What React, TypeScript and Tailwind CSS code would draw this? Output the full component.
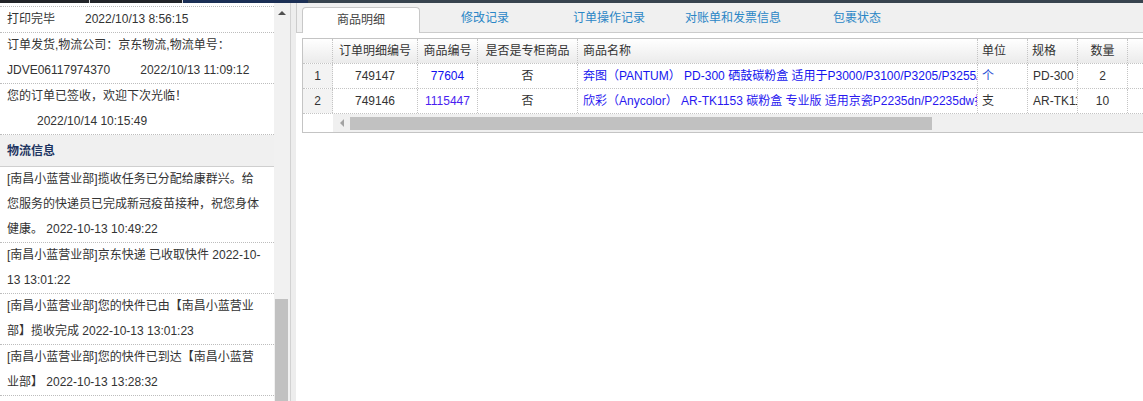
import React from "react";

const cellBase =
  "h-full border-r border-dotted border-[#c4c4c4] overflow-hidden whitespace-nowrap leading-[24px]";
const gridCols =
  "grid grid-cols-[30px_85px_60px_100px_400px_50px_50px_50px_120px]";

function LeftRow({ children }: { children: React.ReactNode }) {
  return (
    <div className="border-b border-dotted border-[#bdbdbd] pl-[7px] leading-[25px] text-[#333]">
      {children}
    </div>
  );
}

function Line({ children }: { children: React.ReactNode }) {
  return <div className="whitespace-nowrap">{children}</div>;
}

const headers = [
  { t: "", c: "justify-center" },
  { t: "订单明细编号", c: "text-center" },
  { t: "商品编号", c: "text-center" },
  { t: "是否是专柜商品", c: "text-center" },
  { t: "商品名称", c: "pl-[5px]" },
  { t: "单位", c: "pl-[4px]" },
  { t: "规格", c: "pl-[4px]" },
  { t: "数量", c: "text-center" },
  { t: "", c: "" },
];

const rows = [
  {
    n: "1",
    id: "749147",
    code: "77604",
    codeColor: "text-[#1010f0]",
    zg: "否",
    name: "奔图（PANTUM） PD-300 硒鼓碳粉盒 适用于P3000/P3100/P3205/P3255/P3405/M6700/M6800系列",
    nameColor: "text-[#1515ee]",
    unit: "个",
    unitColor: "text-[#2a4fd6]",
    spec: "PD-300",
    qty: "2",
  },
  {
    n: "2",
    id: "749146",
    code: "1115447",
    codeColor: "text-[#4a1ef0]",
    zg: "否",
    name: "欣彩（Anycolor） AR-TK1153 碳粉盒 专业版 适用京瓷P2235dn/P2235dw打印机",
    nameColor: "text-[#2a18f0]",
    unit: "支",
    unitColor: "text-[#333]",
    spec: "AR-TK1153",
    qty: "10",
  },
];

export default function App() {
  return (
    <div className="w-[1143px] h-[401px] overflow-hidden flex flex-col bg-white text-[12px] font-['Liberation_Sans','Noto_Sans_CJK_SC',sans-serif]">
      {/* top dark strip */}
      <div className="h-[3px] flex shrink-0">
        <div className="w-[89px] bg-[#222428]" />
        <div className="w-px bg-[#d8d8d8]" />
        <div className="w-[92px] bg-[#222428]" />
        <div className="w-px bg-[#d8d8d8]" />
        <div className="w-[125px] bg-[#1b2f55]" />
        <div className="flex-1 bg-[#38444f]" />
      </div>

      <div className="flex flex-1 min-h-0">
        {/* left panel */}
        <div className="w-[274px] shrink-0 overflow-hidden bg-white">
          <div className="h-[4px] border-b border-dotted border-[#bdbdbd]" />
          <LeftRow>
            <Line>
              打印完毕<span className="inline-block ml-[30px]">2022/10/13 8:56:15</span>
            </Line>
          </LeftRow>
          <LeftRow>
            <Line>订单发货,物流公司：京东物流,物流单号：</Line>
            <Line>
              JDVE06117974370<span className="inline-block ml-[30px]">2022/10/13 11:09:12</span>
            </Line>
          </LeftRow>
          <LeftRow>
            <Line>您的订单已签收，欢迎下次光临！</Line>
            <Line>
              <span className="inline-block ml-[30px]">2022/10/14 10:15:49</span>
            </Line>
          </LeftRow>
          <div className="h-[32px] bg-[#f0f0f0] border-b border-[#cfcfcf] pl-[7px] flex items-center font-bold text-[#1d3461]">
            物流信息
          </div>
          <LeftRow>
            <Line>[南昌小蓝营业部]揽收任务已分配给康群兴。给</Line>
            <Line>您服务的快递员已完成新冠疫苗接种，祝您身体</Line>
            <Line>健康。 2022-10-13 10:49:22</Line>
          </LeftRow>
          <LeftRow>
            <Line>[南昌小蓝营业部]京东快递 已收取快件 2022-10-</Line>
            <Line>13 13:01:22</Line>
          </LeftRow>
          <LeftRow>
            <Line>[南昌小蓝营业部]您的快件已由【南昌小蓝营业</Line>
            <Line>部】揽收完成 2022-10-13 13:01:23</Line>
          </LeftRow>
          <LeftRow>
            <Line>[南昌小蓝营业部]您的快件已到达【南昌小蓝营</Line>
            <Line>业部】 2022-10-13 13:28:32</Line>
          </LeftRow>
        </div>

        {/* left scrollbar */}
        <div className="w-[16px] shrink-0 bg-[#f1f1f1] flex flex-col">
          <div className="pt-[8px] pl-[4px]">
            <div className="w-0 h-0 border-x-[4px] border-x-transparent border-b-[4px] border-b-[#505050]" />
          </div>
          <div className="mt-auto ml-px w-[13px] h-[102px] bg-[#c1c1c1]" />
        </div>
        <div className="w-px shrink-0 bg-[#d2d2d2]" />
        <div className="w-[5px] shrink-0 bg-[#ededed]" />

        {/* right panel */}
        <div className="flex-1 min-w-0 overflow-hidden flex flex-col">
          {/* tabs */}
          <div className="h-[30px] shrink-0 bg-[#f0f0f0] border-b border-l border-[#cccccc] flex items-end gap-[6px] pl-[5px]">
            <div className="w-[118px] h-[26px] -mb-px bg-white border border-b-0 border-[#c8c8c8] rounded-t-[4px] flex items-center justify-center pb-[2px] text-[#444]">
              商品明细
            </div>
            {["修改记录", "订单操作记录", "对账单和发票信息", "包裹状态"].map((t) => (
              <div
                key={t}
                className="w-[118px] h-[26px] flex items-center justify-center pb-[2px] text-[#2a86c6]"
              >
                {t}
              </div>
            ))}
          </div>

          {/* table */}
          <div className="pt-[5px] pl-[6px]">
            <div className="w-[880px] border border-[#c4c4c4] text-[#333]">
              <div
                className={`${gridCols} h-[25px] border-b border-dotted border-[#c4c4c4] bg-linear-to-b from-[#ffffff] to-[#ebebeb]`}
              >
                {headers.map((h, i) => (
                  <div key={i} className={`${cellBase} ${h.c}`}>
                    {h.t}
                  </div>
                ))}
              </div>
              {rows.map((r) => (
                <div
                  key={r.n}
                  className={`${gridCols} h-[25px] border-b border-dotted border-[#c4c4c4]`}
                >
                  <div className={`${cellBase} text-center bg-[#f3f3f3]`}>{r.n}</div>
                  <div className={`${cellBase} text-center`}>{r.id}</div>
                  <div className={`${cellBase} text-center ${r.codeColor}`}>{r.code}</div>
                  <div className={`${cellBase} text-center`}>{r.zg}</div>
                  <div className={`${cellBase} pl-[5px] ${r.nameColor}`}>{r.name}</div>
                  <div className={`${cellBase} pl-[4px] ${r.unitColor}`}>{r.unit}</div>
                  <div className={`${cellBase} pl-[5px]`}>{r.spec}</div>
                  <div className={`${cellBase} text-center`}>{r.qty}</div>
                  <div className={`${cellBase}`} />
                </div>
              ))}
              {/* horizontal scrollbar */}
              <div className="flex h-[18px]">
                <div className="w-[30px] shrink-0 bg-white" />
                <div className="flex-1 bg-[#f0f0f0] flex items-start">
                  <div className="w-[17px] h-full flex items-center pl-[7px]">
                    <div className="w-0 h-0 border-y-[4px] border-y-transparent border-r-[4px] border-r-[#a3a3a3]" />
                  </div>
                  <div className="mt-[3px] w-[582px] h-[13px] bg-[#c1c1c1]" />
                </div>
              </div>
            </div>
          </div>
          <div className="flex-1 bg-white" />
        </div>
      </div>
    </div>
  );
}
